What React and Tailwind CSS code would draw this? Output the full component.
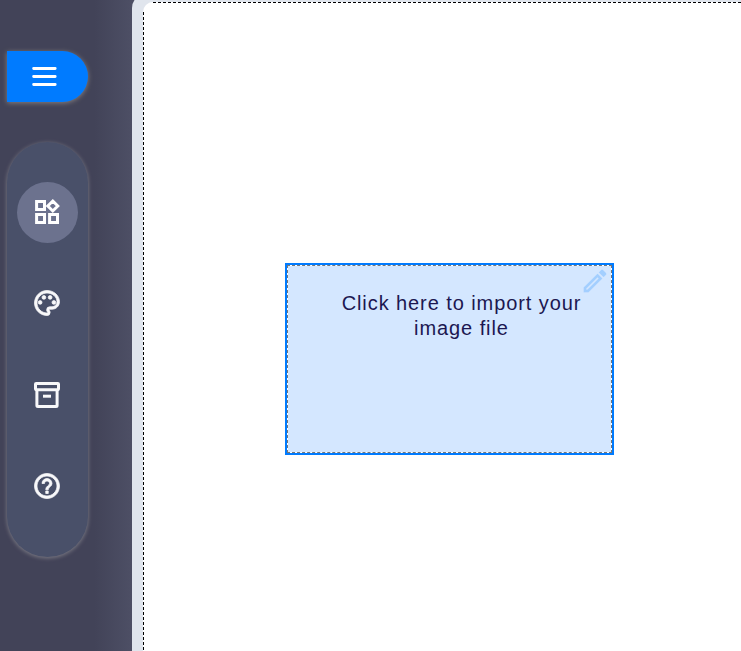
import { MdOutlinePalette, MdHelpOutline, MdOutlineEdit } from 'react-icons/md';

function WidgetsIcon() {
  return (
    <svg className="mb-px mr-px size-[30px]" viewBox="0 0 30 30" fill="none" stroke="#ffffff" strokeWidth="3">
      <path d="M4.6 4.6h7.9v7.9H4.6zM4.6 17.6h7.9v7.9H4.6zM17.6 17.6h7.9v7.9h-7.9zM20.8 4l5 5-5 5-5-5z" />
    </svg>
  );
}

function ArchiveIcon() {
  return (
    <svg className="mb-px mr-px size-[30px]" viewBox="0 0 30 30" fill="none" stroke="#f8f8fa" strokeWidth="3" strokeLinejoin="round">
      <rect x="3.5" y="3.5" width="23" height="6.2" rx="0.6" />
      <path d="M4.9 10v15.4q0 1 1 1h18.2q1 0 1-1V10" />
      <path d="M11 16.2h8" />
    </svg>
  );
}

function PaletteIcon() {
  return <MdOutlinePalette className="mb-px mr-px size-[30px] stroke-[#f8f8fa] stroke-[0.6px] text-[#f8f8fa] [&_path[fill=none]]:hidden" />;
}

function HelpIcon() {
  return <MdHelpOutline className="mb-px mr-px size-[30px] stroke-[#f8f8fa] stroke-[0.6px] text-[#f8f8fa] [&_path[fill=none]]:hidden" />;
}

const tools = [
  { name: 'Widgets', Icon: WidgetsIcon, active: true },
  { name: 'Colors', Icon: PaletteIcon },
  { name: 'Archive', Icon: ArchiveIcon },
  { name: 'Help', Icon: HelpIcon },
];

function Sidebar() {
  return (
    <aside className="flex w-[132px] shrink-0 flex-col bg-[linear-gradient(to_right,#424358_0,#424358_94px,#4d4f65_132px)] pl-[7px] pt-[51px]">
      <button aria-label="Menu" className="flex h-[51px] w-[81px] items-center rounded-r-full bg-[#007bff] pl-[25px] shadow-[0_1px_5px_#87807f]">
        <svg width="25" height="21" viewBox="0 0 25 21" stroke="white" strokeWidth="2.8" strokeLinecap="round">
          <path d="M1.6 2.5h21.6M1.6 10.5h21.6M1.6 18.5h21.6" />
        </svg>
      </button>
      <nav className="mt-[40px] flex h-[415px] w-[81px] flex-col items-center gap-[30.3px] rounded-full bg-[#495069] pt-[40px] shadow-[0_1px_4px_#807f88]">
        {tools.map(({ name, Icon, active }) => (
          <button key={name} aria-label={name} className={active ? 'flex size-[61px] shrink-0 items-center justify-center rounded-full bg-[#6c728e]' : 'flex size-[61px] shrink-0 items-center justify-center rounded-full'}>
            <Icon />
          </button>
        ))}
      </nav>
    </aside>
  );
}

export default function App() {
  return (
    <div className="flex h-[651px] w-[741px] overflow-hidden bg-[#4d4f65] font-['Liberation_Sans',Arial,sans-serif]">
      <Sidebar />
      <main className="-mt-[6px] flex min-w-0 flex-1 rounded-tl-[14px] bg-[#e0e5ed] pl-[11px] pt-[8px]">
        <div className="grid flex-1 grid-cols-[1px_1fr] grid-rows-[1px_1fr] overflow-hidden rounded-tl-[10px] bg-white">
          <div className="col-span-2 ml-[10px] bg-[repeating-linear-gradient(to_right,black_0,black_3px,transparent_3px,transparent_5px)]" />
          <div className="mt-[9px] bg-[repeating-linear-gradient(to_bottom,black_0,black_3px,transparent_3px,transparent_5px)]" />
          <div className="pl-[141px] pt-[260px]">
            <div className="h-[192px] w-[329px] border-2 border-[#007bff] bg-white">
              <div className="relative h-full w-full border border-dashed border-[#777] bg-[#d4e7ff] bg-clip-padding pl-[24px] pt-[25px]">
                <p className="text-center text-[20px] leading-[25px] tracking-[0.92px] text-[#1c1751]">
                  Click here to import your<br />image file
                </p>
                <MdOutlineEdit className="absolute right-[1px] top-0 size-[30px] stroke-[#a3cfff] stroke-[0.1px] text-[#a3cfff] [&_path[fill=none]]:hidden" />
              </div>
            </div>
          </div>
        </div>
      </main>
    </div>
  );
}
